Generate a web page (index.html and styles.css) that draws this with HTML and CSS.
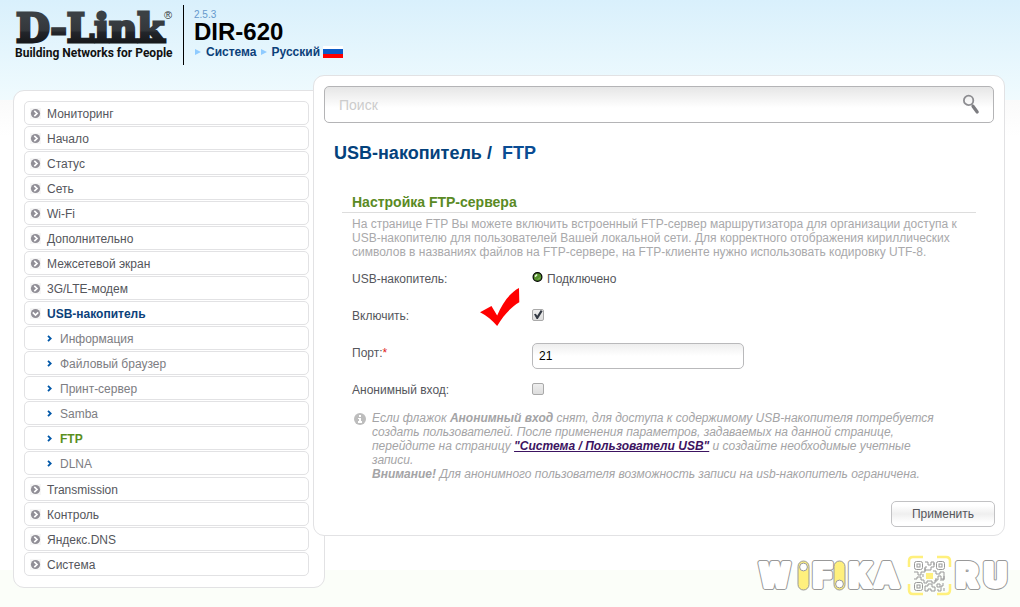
FILE: index.html
```html
<!DOCTYPE html>
<html lang="ru">
<head>
<meta charset="utf-8">
<meta name="viewport" content="width=device-width, initial-scale=1">
<title>DIR-620 — USB-накопитель / FTP</title>
<link rel="stylesheet" href="styles.css">
</head>
<body>
<svg class="sprite" aria-hidden="true">
  <symbol id="arrow" viewBox="0 0 11 11">
    <rect width="11" height="11" fill="#f6f6f6"/>
    <circle cx="5.5" cy="5.5" r="4.6" fill="#908e96"/>
    <path d="M4.3 2.8 7 5.5 4.3 8.2" fill="none" stroke="#fff" stroke-width="1.7"/>
  </symbol>
  <symbol id="chevron" viewBox="0 0 5 7">
    <path d="M1 .8 3.7 3.5 1 6.2" fill="none" stroke="#0057a8" stroke-width="1.8"/>
  </symbol>
</svg>

<header class="header">
  <svg class="logo" viewBox="0 0 160 52" role="img" aria-label="D-Link. Building Networks for People">
    <defs>
      <linearGradient id="metal" x1="0" y1="0" x2="0" y2="1">
        <stop offset=".25" stop-color="#3b4044"/>
        <stop offset=".55" stop-color="#33373b"/>
        <stop offset=".6" stop-color="#22252a"/>
        <stop offset=".8" stop-color="#181a1d"/>
      </linearGradient>
    </defs>
    <text class="logo-name" x="1" y="34">D-Link</text>
    <text class="logo-mark" x="149" y="11">®</text>
    <text class="logo-tag" x="0" y="49">Building Networks for People</text>
  </svg>
  <div class="device">
    <span class="version">2.5.3</span>
    <strong class="model">DIR-620</strong>
    <nav class="topnav">
      <a href="#system">Система</a>
      <a href="#lang">Русский</a>
      <svg class="flag" viewBox="0 0 20 12" aria-hidden="true"><path fill="#fff" d="M0 0h20v4H0z"/><path fill="#0c5bc7" d="M0 3h20v5H0z"/><path fill="#f00" d="M0 8h20v4H0z"/></svg>
    </nav>
  </div>
</header>

<div class="layout">
  <nav class="sidebar">
    <ul class="menu">
      <li><a href="#m1"><svg class="arrow"><use href="#arrow"/></svg>Мониторинг</a></li>
      <li><a href="#m2"><svg class="arrow"><use href="#arrow"/></svg>Начало</a></li>
      <li><a href="#m3"><svg class="arrow"><use href="#arrow"/></svg>Статус</a></li>
      <li><a href="#m4"><svg class="arrow"><use href="#arrow"/></svg>Сеть</a></li>
      <li><a href="#m5"><svg class="arrow"><use href="#arrow"/></svg>Wi-Fi</a></li>
      <li><a href="#m6"><svg class="arrow"><use href="#arrow"/></svg>Дополнительно</a></li>
      <li><a href="#m7"><svg class="arrow"><use href="#arrow"/></svg>Межсетевой экран</a></li>
      <li><a href="#m8"><svg class="arrow"><use href="#arrow"/></svg>3G/LTE-модем</a></li>
      <li><a class="open" href="#m9"><svg class="arrow"><use href="#arrow"/></svg>USB-накопитель</a>
        <ul class="submenu">
          <li><a href="#s1"><svg class="chevron"><use href="#chevron"/></svg>Информация</a></li>
          <li><a href="#s2"><svg class="chevron"><use href="#chevron"/></svg>Файловый браузер</a></li>
          <li><a href="#s3"><svg class="chevron"><use href="#chevron"/></svg>Принт-сервер</a></li>
          <li><a href="#s4"><svg class="chevron"><use href="#chevron"/></svg>Samba</a></li>
          <li><a class="current" href="#s5"><svg class="chevron"><use href="#chevron"/></svg>FTP</a></li>
          <li><a href="#s6"><svg class="chevron"><use href="#chevron"/></svg>DLNA</a></li>
        </ul>
      </li>
      <li><a href="#m10"><svg class="arrow"><use href="#arrow"/></svg>Transmission</a></li>
      <li><a href="#m11"><svg class="arrow"><use href="#arrow"/></svg>Контроль</a></li>
      <li><a href="#m12"><svg class="arrow"><use href="#arrow"/></svg>Яндекс.DNS</a></li>
      <li><a href="#m13"><svg class="arrow"><use href="#arrow"/></svg>Система</a></li>
    </ul>
  </nav>

  <div class="column">
    <main class="panel">
      <div class="search">
        <input type="text" placeholder="Поиск" aria-label="Поиск">
        <svg class="lens" viewBox="0 0 18 22" aria-hidden="true">
          <circle cx="6.6" cy="6.4" r="4.7" fill="none" stroke="#8d8d91" stroke-width="1.8"/>
          <path d="M9.6 10.2l1.6 2.3" stroke="#8d8d91" stroke-width="1.4"/>
          <path d="M11 12.2l4.2 5.8" stroke="#7c7c80" stroke-width="3.2" stroke-linecap="round"/>
        </svg>
      </div>

      <h1 class="title">USB-накопитель /&nbsp; <span>FTP</span></h1>

      <form class="form">
        <h2 class="section">Настройка FTP-сервера</h2>
        <div class="content">
          <p class="intro">На странице FTP Вы можете включить встроенный FTP-сервер маршрутизатора для организации доступа к USB-накопителю для пользователей Вашей локальной сети. Для корректного отображения кириллических символов в названиях файлов на FTP-сервере, на FTP-клиенте нужно использовать кодировку UTF-8.</p>
          <div class="row">
            <span class="label">USB-накопитель:</span>
            <span class="status">
              <svg class="led" viewBox="0 0 12 12" aria-hidden="true"><circle cx="6" cy="6" r="4.8" fill="#55902c" stroke="#000" stroke-width="1.3"/><path d="M3.2 5.6 5.6 3.2" stroke="#e8f5dc" stroke-width="1.6"/><path d="M6.5 8.8 8.8 6.5" stroke="#8fc36a" stroke-width="1"/></svg>
              Подключено
            </span>
          </div>
          <div class="row marked">
            <label class="label" for="enable">Включить:</label>
            <input class="check" id="enable" type="checkbox" checked>
            <svg class="tick" viewBox="0 0 42 40" aria-hidden="true"><path fill="#f00" d="M0 25.5 12 19l6 10C24 14 33 4 41 0l.3 15C33 20 25 28 18 40 13 34 7 29 0 25.5z"/></svg>
          </div>
          <div class="row">
            <label class="label" for="port">Порт:<span class="req">*</span></label>
            <input class="field" id="port" type="text" value="21">
          </div>
          <div class="row">
            <label class="label" for="anon">Анонимный вход:</label>
            <input class="check" id="anon" type="checkbox">
          </div>
          <div class="note">
            <svg class="info" viewBox="0 0 12 12" aria-hidden="true"><circle cx="6" cy="6" r="6" fill="#bdbdbd"/><path fill="#fff" d="M5 2h2v2H5zM4 5h3v3h1v2H4V8h1V6H4z"/></svg>
            <p>Если флажок <b>Анонимный вход</b> снят, для доступа к содержимому USB-накопителя потребуется создать пользователей. После применения параметров, задаваемых на данной странице, перейдите на страницу <a href="#users">"Система / Пользователи USB"</a> и создайте необходимые учетные записи.<br><b>Внимание!</b> Для анонимного пользователя возможность записи на usb-накопитель ограничена.</p>
          </div>
        </div>
        <div class="actions"><button type="button" class="apply">Применить</button></div>
      </form>
    </main>

    <svg class="watermark" viewBox="0 0 252 42" role="img" aria-label="WIFIKA.RU">
      <g class="wm-outer"><text y="32" x="3 56 92 118 199 227">WFKARU</text></g>
      <g class="wm-inner"><text y="32" x="3 56 92 118 199 227">WFKARU</text></g>
      <g fill="#fff07d" stroke="#999" stroke-width="1">
        <rect x="41" y="6" width="11" height="29" rx="5.5"/>
        <rect x="77" y="6" width="11" height="29" rx="5.5"/>
        <circle cx="46.5" cy="12" r="3.9" fill="#fff"/>
        <circle cx="82.5" cy="29" r="3.9" fill="#fff"/>
      </g>
      <path d="M152 12V6q0-4 4-4h10M180 2h9q4 0 4 4v6M193 29v6q0 4-4 4h-9M166 39h-10q-4 0-4-4v-6" fill="none" stroke="#fff07d" stroke-width="2.5"/>
      <path fill="#fff07d" d="M169 18h7v6h-7z"/>
      <g fill="none" stroke="#999" stroke-width="1">
        <rect x="157.5" y="6.5" width="8" height="8" rx="2"/><rect x="160" y="9" width="3" height="3"/>
        <rect x="179.5" y="6.5" width="8" height="8" rx="2"/><rect x="182" y="9" width="3" height="3"/>
        <rect x="157.5" y="27.5" width="8" height="8" rx="2"/><rect x="160" y="30" width="3" height="3"/>
        <path d="M168 7h3v3h3V7h3v5h-3v3h-6v-3h2M157 17h4v3h3v-3h4v-2M157 24h3v-2h4v3h3v3h3v-2h5v2h3v-3h3v-4h3v3h3v-7h-4v2h-4v-3h-3M168 31h3v-2h4v3h3v4h-4v-2h-3v2h-3zM180 29h3v3h-3zM186 28v3h-2v5h-3v-2M187 33v3M166 19v3M179 23v4M176 9h2M168 13v3M187 21v4h-4"/>
      </g>
    </svg>
  </div>
</div>
</body>
</html>
```

FILE: styles.css
```css
* {
  box-sizing: border-box;
}

body {
  margin: 0;
  min-height: 100vh;
  font: 12px/14px "Liberation Sans", Arial, sans-serif;
  color: #55565c;
  background:
    linear-gradient(#fbfef9, #fbfef9) bottom / 100% 37px no-repeat,
    linear-gradient(#d9f0fc, #f0fbfe) top / 100% 100px no-repeat,
    linear-gradient(#fafafa, #fff) 0 100px / 100% 36px no-repeat,
    #fff;
}

a {
  color: inherit;
  text-decoration: none;
}

ul {
  list-style: none;
  margin: 0;
  padding: 0;
}

.sprite {
  position: absolute;
  width: 0;
  height: 0;
}

/* Header */
.header {
  display: flex;
  height: 75px;
  padding: 5px 15px 10px;
}

.logo {
  width: 160px;
  height: 52px;
  margin: 3px 8px 0 0;
  overflow: visible;
}

.logo-name {
  font: bold 39px "DejaVu Serif", serif;
  fill: url(#metal);
  stroke: url(#metal);
  stroke-width: 3;
}

.logo-mark {
  font: 11px "Liberation Sans", sans-serif;
  fill: #333;
}

.logo-tag {
  font: bold 12px "Roboto", sans-serif;
  fill: #111;
}

.device {
  display: flex;
  flex-direction: column;
  height: 60px;
  padding: 4px 0 0 10px;
  border-left: 1px solid #000;
}

.version {
  font-size: 10px;
  line-height: 11px;
  color: #6699cc;
}

.model {
  font-size: 24px;
  line-height: 24px;
  color: #000;
}

.topnav {
  display: flex;
  align-items: center;
  gap: 3px;
  font-weight: bold;
  color: #0c417a;
  line-height: 16px;
}

.topnav a {
  display: flex;
  align-items: center;
  gap: 5px;
}

.topnav a::before {
  content: "";
  margin-left: 1px;
  border: 3px solid transparent;
  border-left: 6px solid #8fcbff;
  border-right: 0;
}

.flag {
  width: 20px;
  height: 12px;
}

/* Layout */
.layout {
  display: flex;
  align-items: flex-start;
  padding-left: 13px;
}

.sidebar {
  flex: none;
  width: 312px;
  margin-top: 15px;
  padding: 10px 15px 10px 10px;
  border: 1px solid #e2e2e4;
  border-radius: 11px;
  background: #fff;
}

.column {
  position: relative;
  flex: 1;
  min-width: 0;
  display: flex;
  flex-direction: column;
  margin-left: -12px;
}

.panel {
  margin-right: 15px;
  padding: 10px 10px 8px;
  border: 1px solid #e2e2e4;
  border-radius: 11px;
  background: #fff;
}

/* Menu */
.menu a {
  display: flex;
  align-items: center;
  gap: 6px;
  height: 24px;
  margin-bottom: 1px;
  padding: 1px 5px 0;
  border: 1px solid #e2e2e4;
  border-radius: 5px;
}

.arrow {
  width: 11px;
  height: 11px;
}

.menu .open {
  font-weight: bold;
  color: #0c417a;
}

.open .arrow {
  transform: rotate(90deg);
}

.submenu {
  padding-bottom: 1px;
}

.submenu a {
  padding-left: 22px;
  gap: 8px;
  color: #7d7d82;
}

.submenu .current {
  font-weight: bold;
  color: #5a8f1e;
}

.chevron {
  width: 5px;
  height: 7px;
}

/* Search */
.search {
  display: flex;
  align-items: center;
  height: 37px;
  padding: 0 13px 0 14px;
  border: 1px solid #b4b4b6;
  border-radius: 5px;
  background: linear-gradient(#e6e6e6, #fff 60%);
}

.search input {
  flex: 1;
  min-width: 0;
  padding: 0;
  border: 0;
  outline: 0;
  background: none;
  font: 14px/18px "Liberation Sans", Arial, sans-serif;
}

.search input::placeholder {
  color: #ccc;
  opacity: 1;
}

.lens {
  width: 18px;
  height: 22px;
}

/* Content */
.title {
  margin: 18px 10px 29px;
  font-size: 18px;
  line-height: 24px;
  color: #04427c;
}

.title span {
  color: #0a4c94;
}

.section {
  margin: 0 18px;
  padding: 0 10px 1px;
  border-bottom: 1px solid #ddd;
  font-size: 14px;
  line-height: 17px;
  color: #5a8a24;
}

.content {
  padding: 4px 28px 0;
}

.intro {
  max-width: 616px;
  margin: 0 0 1px;
  color: #a9a9ab;
}

.row {
  display: flex;
  align-items: center;
  height: 37px;
}

.marked {
  position: relative;
}

.label {
  width: 180px;
}

.req {
  color: #e02020;
}

.status {
  display: flex;
  align-items: center;
  gap: 4px;
}

.led {
  width: 11px;
  height: 12px;
  margin-bottom: 4px;
}

.tick {
  position: absolute;
  left: 127px;
  top: -9px;
  width: 42px;
  height: 38px;
}

.check {
  appearance: none;
  width: 12px;
  height: 12px;
  margin: 0 0 2px;
  border: 1px solid #a9a9a9;
  border-radius: 2px;
  background: linear-gradient(#eee, #ddd);
}

.check:checked::before {
  content: "";
  display: block;
  height: 10px;
  background: #333a44;
  clip-path: polygon(10% 48%, 28% 42%, 42% 62%, 78% 5%, 96% 18%, 48% 95%, 36% 95%);
}

.field {
  width: 212px;
  height: 26px;
  margin-top: 6px;
  padding: 0 6px;
  border: 1px solid #b9b9bb;
  border-radius: 5px;
  background: linear-gradient(#eee, #fff 50%);
  font: 12px/14px "Liberation Sans", Arial, sans-serif;
  color: #000;
}

.note {
  display: flex;
  gap: 6px;
  max-width: 596px;
  padding: 3px 0 0 2px;
  font-style: italic;
  color: #a4a4a6;
}

.note p {
  margin: 0;
}

.note a {
  font-weight: bold;
  color: #3c1361;
  text-decoration: underline;
}

.info {
  flex: none;
  width: 12px;
  height: 12px;
  margin-top: 2px;
}

.actions {
  display: flex;
  justify-content: flex-end;
  margin: 20px -1px 0;
}

.apply {
  height: 26px;
  padding: 0 20px;
  border: 1px solid #c2c2c4;
  border-radius: 5px;
  background: linear-gradient(#fff 15%, #efefef 50%, #fff 85%);
  font: 12px/14px "Liberation Sans", Arial, sans-serif;
  color: #55565c;
}

/* Watermark */
.watermark {
  align-self: flex-end;
  width: 252px;
  height: 42px;
  margin: 19px 11px 0 0;
  overflow: visible;
}

.watermark text {
  font: 900 34px "Roboto", sans-serif;
}

.wm-outer {
  fill: #999;
  stroke: #999;
  stroke-width: 6;
  stroke-linejoin: round;
}

.wm-inner {
  fill: #fff;
  stroke: #fff;
  stroke-width: 4;
  stroke-linejoin: round;
}
```
